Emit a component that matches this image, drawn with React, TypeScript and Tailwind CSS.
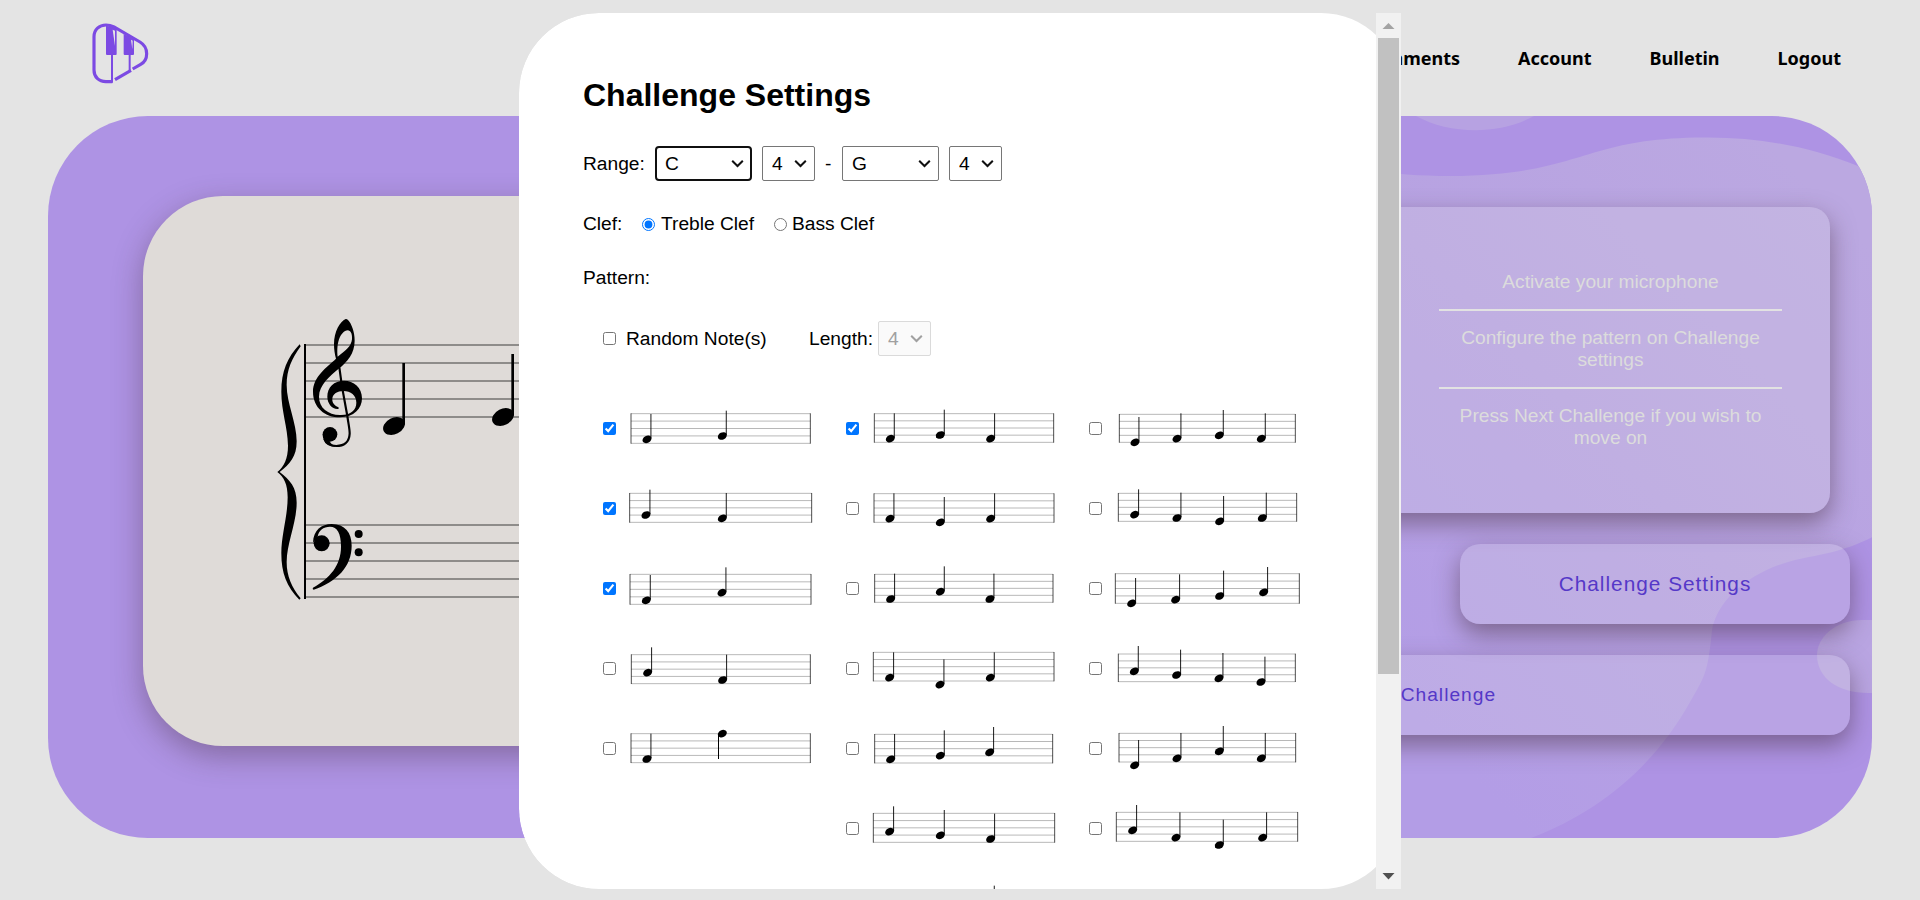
import React from "react";

type Note = [number, number, ("down")?];
type Pattern = {
  left: number;
  right: number;
  top: number;
  bottom: number;
  notes: Note[];
  checked?: boolean;
};

const COLUMNS: Pattern[][] = [
  [
    { left: 15, right: 553, top: 77, bottom: 166, notes: [[63, 154], [289, 144]], checked: true },
    { left: 11, right: 557, top: 76, bottom: 163, notes: [[60, 141], [289, 151]], checked: true },
    { left: 12, right: 555, top: 79, bottom: 169, notes: [[61, 157], [288, 134]], checked: true },
    { left: 16, right: 553, top: 80, bottom: 167, notes: [[65, 134], [290, 156]] },
    { left: 15, right: 553, top: 77, bottom: 164, notes: [[63, 153], [289, 77, "down"]] },
  ],
  [
    { left: 16, right: 554, top: 77, bottom: 163, notes: [[64, 152], [214, 141], [365, 152]], checked: true },
    { left: 15, right: 555, top: 77, bottom: 163, notes: [[63, 152], [214, 163], [365, 152]] },
    { left: 17, right: 552, top: 79, bottom: 163, notes: [[65, 153], [214, 131], [363, 153]] },
    { left: 13, right: 555, top: 73, bottom: 159, notes: [[62, 149], [213, 170], [364, 149]] },
    { left: 17, right: 551, top: 79, bottom: 165, notes: [[65, 154], [214, 143], [362, 133]] },
    { left: 13, right: 557, top: 76, bottom: 163, notes: [[62, 131], [214, 142], [365, 153]] },
    { left: 14, right: 555, top: 81, bottom: 168, notes: [[63, 158], [214, 144], [364, 129]] },
  ],
  [
    { left: 22, right: 550, top: 79, bottom: 163, notes: [[69, 163], [195, 152], [322, 142], [448, 152]] },
    { left: 19, right: 554, top: 76, bottom: 160, notes: [[68, 140], [195, 150], [323, 160], [451, 150]] },
    { left: 10, right: 562, top: 77, bottom: 166, notes: [[59, 166], [191, 155], [323, 144], [455, 133]] },
    { left: 19, right: 550, top: 78, bottom: 161, notes: [[67, 130], [194, 141], [321, 151], [447, 162]] },
    { left: 21, right: 551, top: 76, bottom: 162, notes: [[68, 172], [195, 151], [322, 130], [448, 151]] },
    { left: 13, right: 557, top: 73, bottom: 160, notes: [[62, 127], [192, 149], [322, 171], [452, 149]] },
    { left: 14, right: 555, top: 86, bottom: 170, notes: [[62, 170], [192, 160], [322, 150], [452, 160]] },
  ],
];

function Staff({ pattern }: { pattern: Pattern }) {
  const { left, right, top, bottom, notes } = pattern;
  const gap = (bottom - top) / 4;
  return (
    <svg width="200" height="80" viewBox="0 0 600 240" className="shrink-0">
      {[0, 1, 2, 3, 4].map((i) => (
        <line key={i} x1={left} x2={right} y1={top + gap * i} y2={top + gap * i} stroke="#000" strokeOpacity={0.3} strokeWidth={2.8} />
      ))}
      <line x1={left} x2={left} y1={top - 1} y2={bottom + 1} stroke="#000" strokeOpacity={0.75} strokeWidth={2.8} />
      <line x1={right} x2={right} y1={top - 1} y2={bottom + 1} stroke="#000" strokeOpacity={0.75} strokeWidth={2.8} />
      {notes.map(([x, y, dir], i) => (
        <g key={i}>
          <ellipse cx={x} cy={y} rx={14.2} ry={10.6} transform={`rotate(-27 ${x} ${y})`} />
          {dir === "down" ? (
            <line x1={x - 11.5} x2={x - 11.5} y1={y + 3} y2={y + 76} stroke="#000" strokeWidth={3} />
          ) : (
            <line x1={x + 11.8} x2={x + 11.8} y1={y - 3} y2={y - 76} stroke="#000" strokeOpacity={0.9} strokeWidth={3} />
          )}
        </g>
      ))}
    </svg>
  );
}

function Logo() {
  return (
    <svg width="100" height="90" viewBox="0 0 300 270" fill="none" stroke="#7c4ae3" strokeWidth="9.5">
      <path d="M127 215H108C86 215 72 201 72 180V80C72 58 88 45 108 45C118 45 126 48 132 51L210 96C223 104 230 117 230 131C230 146 223 157 212 163L188 177" />
      <path d="M135 209L183 181" />
      <path d="M126 134V218" strokeWidth="6" />
      <path d="M179 134V184" strokeWidth="6" />
      <path d="M108 47L140 55V132Q140 135 137 135H111Q108 135 108 132Z" fill="#7c4ae3" stroke="none" />
      <path d="M161 72L192 88V132Q192 135 189 135H164Q161 135 161 132Z" fill="#7c4ae3" stroke="none" />
      <path d="M128 59L135 62V108Z" fill="#e4e4e4" stroke="none" />
      <path d="M183 89L188 92L187 118Z" fill="#e4e4e4" stroke="none" />
    </svg>
  );
}

function GrandStaff() {
  return (
    <svg width="420" height="550" viewBox="0 0 420 550">
      <g transform="translate(-13 84) scale(.33333)">
        {[195, 249, 303, 357, 411, 735, 789, 843, 897, 951].map((y) => (
          <path key={y} d={`M525 ${y}H1250`} stroke="#8e8c8a" strokeWidth="5.4" />
        ))}
        <path d="M525 192V957" stroke="#000" strokeWidth="6" />
        <path d="M509 193C472 232 454 275 454 335C454 395 473 440 474 497C474 535 462 560 442 576C462 592 473 612 473 652C473 708 454 765 454 820C454 880 470 920 508 959L512 955C485 922 470 888 470 846C470 790 500 728 500 668C500 622 480 600 449 576C480 552 500 530 500 484C500 428 470 370 470 315C470 268 486 235 512 199Z" />
        <path
          fillRule="evenodd"
          d="M647 117C630 124 612 155 612 192C612 208 614 222 618 236C590 262 549 290 549 335C549 383 585 412 630 412C672 412 696 386 696 355C696 322 671 302 642 302C612 302 592 322 592 350C592 370 606 387 622 387C629 386 627 382 622 380C610 374 606 364 607 356C608 342 622 333 640 333C662 333 679 346 679 368C679 390 662 406 630 405C594 404 567 384 567 350C567 315 600 288 626 266C652 246 674 220 674 182C674 155 664 130 654 120Q650 116 647 117ZM623 230C621 215 622 195 625 185C630 165 642 151 654 151C664 153 667 165 666 178C664 200 645 213 623 230Z"
        />
        <path d="M628 262L636 320L652 408C656 436 659 446 659 461C658 487 641 498 619 498C602 498 588 492 583 477" fill="none" stroke="#000" strokeWidth="6.5" />
        <path d="M578 463C578 484 592 500 618 501C606 494 602 490 599 484Z" />
        <circle cx="600" cy="463" r="22" />
        <path d="M549 788C550 750 575 732 605 732C645 732 665 758 665 797C665 860 620 905 551 929Q546 928 549 923C600 895 633 855 633 800C633 760 622 740 600 740C580 740 565 752 563 771Z" />
        <circle cx="575" cy="790" r="24" />
        <circle cx="686" cy="762" r="12" />
        <circle cx="686" cy="817" r="12" />
        <ellipse cx="792" cy="438" rx="34.5" ry="24.5" transform="rotate(-27 792 438)" />
        <path d="M821 249V434" stroke="#000" strokeWidth="8" />
        <ellipse cx="1119" cy="411" rx="34.5" ry="24.5" transform="rotate(-27 1119 411)" />
        <path d="M1148 222V407" stroke="#000" strokeWidth="8" />
      </g>
    </svg>
  );
}

function Waves() {
  return (
    <svg className="absolute inset-0" width="1824" height="722" viewBox="48 116 1824 722">
      <defs>
        <linearGradient id="wave" gradientUnits="userSpaceOnUse" x1="1400" y1="700" x2="1872" y2="250">
          <stop offset="0" stopColor="#b39de6" />
          <stop offset="0.5" stopColor="#b7a2e2" />
          <stop offset="1" stopColor="#bba8e1" />
        </linearGradient>
      </defs>
      <path d="M1416 116C1450 135 1500 135 1534 116Z" fill="#b7a2e2" />
      <path
        d="M1300 150C1340 168 1390 176 1450 176C1585 175 1580 138 1704 137.500C1760 137 1810 147 1858 166L1890 180V527C1850 552 1825 553 1795 560C1750 571 1717 600 1712 630C1708 670 1706 675 1690 702C1655 765 1600 812 1531 838H1200V150Z"
        fill="url(#wave)"
      />
      <path d="M1880 620H1862C1836 620 1817 637 1817 655C1817 678 1838 693 1868 693H1880Z" fill="#b9a5e2" />
    </svg>
  );
}

function Select({ value, wide, focused, disabled }: { value: string; wide?: boolean; focused?: boolean; disabled?: boolean }) {
  return (
    <span className={`relative inline-flex h-[35px] shrink-0 ${wide ? "w-[97px]" : "w-[53px]"}`}>
      <select
        disabled={disabled}
        defaultValue={value}
        className={`h-full w-full appearance-none text-[19.2px] leading-[22px] outline-none ${
          focused
            ? "rounded-[4px] border-2 border-[#101010] pl-[8px]"
            : disabled
              ? "rounded-[2px] border border-[#dadada] bg-[#fafafa] pl-[9px] text-[#a0a0a0] opacity-100"
              : "rounded-[2px] border border-[#767676] pl-[9px]"
        }`}
      >
        <option>{value}</option>
      </select>
      <svg className="pointer-events-none absolute right-2 top-[13px]" width="13" height="10" viewBox="0 0 13 10" fill="none" stroke={disabled ? "#a0a0a0" : "#101010"} strokeWidth="2">
        <path d="M1.2 1.8L6.5 7L11.8 1.8" />
      </svg>
    </span>
  );
}

function SettingsModal() {
  return (
    <div className="absolute left-[519px] top-[13px] flex h-[876px] w-[882px] overflow-hidden rounded-l-[80px]">
      <div className="h-full w-[857px] overflow-hidden bg-white [clip-path:inset(0_-25px_0_0_round_80px)]">
        <div className="flex flex-col pl-16 pt-16 text-[19.2px] leading-[22px] text-black">
          <h1 className="text-[32px] font-bold leading-[37px]">Challenge Settings</h1>
          <div className="mt-8 flex h-[35px] items-center">
            <span className="w-[72px]">Range:</span>
            <Select value="C" wide focused />
            <span className="w-[10px]" />
            <Select value="4" />
            <span className="w-[27px] pl-[10px]">-</span>
            <Select value="G" wide />
            <span className="w-[10px]" />
            <Select value="4" />
          </div>
          <div className="mt-8 flex h-[22px] items-center">
            <span className="w-[59px]">Clef:</span>
            <input type="radio" name="clef" defaultChecked className="size-[13px]" />
            <span className="w-[119px] pl-[6px]">Treble Clef</span>
            <input type="radio" name="clef" className="size-[13px]" />
            <span className="pl-[5px]">Bass Clef</span>
          </div>
          <p className="mt-8">Pattern:</p>
          <div className="mt-8 flex h-[35px] items-center pl-5">
            <input type="checkbox" className="size-[13px]" />
            <span className="w-[193px] pl-[10px]">Random Note(s)</span>
            <span className="w-[69px]">Length:</span>
            <Select value="4" disabled />
          </div>
          <div className="mt-8 flex pl-5">
            {COLUMNS.map((col, c) => (
              <div key={c} className="w-[243px] shrink-0">
                {col.map((p, r) => (
                  <label key={r} className="flex h-20 items-center gap-[10px]">
                    <input type="checkbox" defaultChecked={p.checked} className="size-[13px] shrink-0" />
                    <Staff pattern={p} />
                  </label>
                ))}
              </div>
            ))}
          </div>
        </div>
      </div>
      <div className="flex w-[25px] flex-col items-center bg-[#f1f1f1]">
        <svg width="25" height="25" viewBox="0 0 25 25"><path d="M6.5 16L12.5 10L18.5 16Z" fill="#a3a3a3" /></svg>
        <div className="h-[636px] w-[21px] bg-[#c1c1c1]" />
        <svg className="mt-auto" width="25" height="25" viewBox="0 0 25 25"><path d="M6.5 9L12.5 15.5L18.5 9Z" fill="#505050" /></svg>
      </div>
    </div>
  );
}

const NAV = ["Assignments", "Account", "Bulletin", "Logout"];
const CARD = "rounded-[20px] bg-[rgba(228,228,228,0.2)] shadow-[0_10px_25px_rgba(70,45,60,0.5)]";

export default function App() {
  return (
    <div className="relative h-[900px] w-[1920px] overflow-hidden bg-[#e4e4e4] font-['Liberation_Sans',Arial,sans-serif]">
      <header className="flex h-[116px] justify-between pl-[70px] pr-[79px] pt-[10px]">
        <Logo />
        <nav className="flex h-[96px] items-center gap-[58px] font-['Noto_Sans',sans-serif] text-[18px] font-bold text-black">
          {NAV.map((n) => (
            <a key={n}>{n}</a>
          ))}
        </nav>
      </header>
      <main className="relative mx-12 flex h-[722px] justify-between overflow-hidden rounded-[100px] bg-[#ae93e4]">
        <Waves />
        <section className="relative ml-[95px] mt-20 h-[550px] w-[800px] rounded-[80px] bg-[#dfdbd8] shadow-[0_10px_30px_rgba(70,45,60,0.4)]">
          <GrandStaff />
        </section>
        <section className="relative flex w-[875px] flex-col items-end pr-[22px] pt-[91px]">
          <div className={`${CARD} mr-5 flex h-[306px] w-[600px] flex-col items-end pr-12 pt-[51px]`}>
            <ul className="w-[343px] text-center text-[19.2px] leading-[22px] text-[#dcdcdc]">
              <li className="border-b-2 border-[#e2e2e2] px-4 pb-[16px] pt-[13px]">Activate your microphone</li>
              <li className="border-b-2 border-[#e2e2e2] px-4 py-4">Configure the pattern on Challenge settings</li>
              <li className="px-4 py-4">Press Next Challenge if you wish to move on</li>
            </ul>
          </div>
          <button className={`${CARD} mt-[31px] h-20 w-[390px] text-[20.8px] tracking-[1px] text-[#5538c8]`}>Challenge Settings</button>
          <button className={`${CARD} mt-[31px] h-20 w-[853px] shrink-0 text-[19.2px] tracking-[1px] text-[#5538c8]`}>Next Challenge</button>
        </section>
      </main>
      <SettingsModal />
    </div>
  );
}
